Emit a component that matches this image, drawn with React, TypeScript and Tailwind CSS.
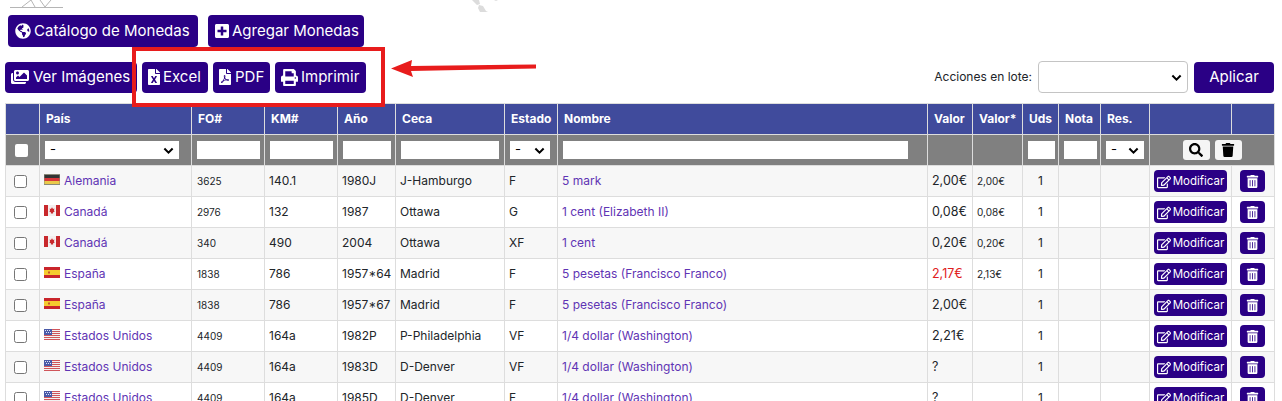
import React from 'react'
import { FaGlobeAmericas, FaPlusSquare, FaImages, FaFileExcel, FaFilePdf, FaPrint, FaSearch, FaTrash, FaRegEdit, FaTrashAlt } from 'react-icons/fa'

const Flag: React.FC<{ code: string }> = ({ code }) => {
  if (code === 'de') {
    return (
      <svg width="16" height="11" viewBox="0 0 16 11" className="inline-block shrink-0 -mt-[3px]">
        <rect width="16" height="11" fill="#8a8a7a" />
        <rect x="0.5" y="1" width="15" height="3" fill="#333" />
        <rect x="0.5" y="4" width="15" height="3" fill="#d8363a" />
        <rect x="0.5" y="7" width="15" height="3" fill="#eac94a" />
      </svg>
    )
  }
  if (code === 'ca') {
    return (
      <svg width="16" height="11" viewBox="0 0 16 11" className="inline-block shrink-0 -mt-[3px]">
        <rect width="16" height="11" fill="#f3eeee" />
        <rect width="4" height="11" fill="#c8282c" />
        <rect x="12" width="4" height="11" fill="#c8282c" />
        <path d="M8 2.2 9 4l1.4-.4-.5 2 .9.6L9 7.4l.1 1H6.900l.1-1-1.800-1.200.9-.6-.5-2L7 4z" fill="#c8282c" />
      </svg>
    )
  }
  if (code === 'es') {
    return (
      <svg width="16" height="11" viewBox="0 0 16 11" className="inline-block shrink-0 -mt-[3px]">
        <rect width="16" height="11" fill="#c9252b" />
        <rect y="3" width="16" height="5" fill="#f5cb2e" />
        <rect x="4" y="4.500" width="2" height="2" fill="#c9552b" />
      </svg>
    )
  }
  return (
    <svg width="16" height="11" viewBox="0 0 16 11" className="inline-block shrink-0 -mt-[3px]">
      <rect width="16" height="11" fill="#f2f2f2" />
      {[0, 2, 4, 6, 8, 10].map((y) => (
        <rect key={y} y={y} width="16" height="1" fill="#d0555a" />
      ))}
      <rect width="8" height="6" fill="#4a5aa8" />
      {[1, 3, 5].map((x) => (
        <rect key={x} x={x} y="1" width="1" height="1" fill="#dfe3f5" />
      ))}
      {[2, 4, 6].map((x) => (
        <rect key={x} x={x} y="3" width="1" height="1" fill="#dfe3f5" />
      ))}
    </svg>
  )
}

const rows = [
  { flag: 'de', pais: 'Alemania', fo: '3625', km: '140.1', ano: '1980J', ceca: 'J-Hamburgo', est: 'F', nombre: '5 mark', valor: '2,00€', valor2: '2,00€' },
  { flag: 'ca', pais: 'Canadá', fo: '2976', km: '132', ano: '1987', ceca: 'Ottawa', est: 'G', nombre: '1 cent (Elizabeth II)', valor: '0,08€', valor2: '0,08€' },
  { flag: 'ca', pais: 'Canadá', fo: '340', km: '490', ano: '2004', ceca: 'Ottawa', est: 'XF', nombre: '1 cent', valor: '0,20€', valor2: '0,20€' },
  { flag: 'es', pais: 'España', fo: '1838', km: '786', ano: '1957*64', ceca: 'Madrid', est: 'F', nombre: '5 pesetas (Francisco Franco)', valor: '2,17€', valor2: '2,13€', red: true },
  { flag: 'es', pais: 'España', fo: '1838', km: '786', ano: '1957*67', ceca: 'Madrid', est: 'F', nombre: '5 pesetas (Francisco Franco)', valor: '2,00€', valor2: '' },
  { flag: 'us', pais: 'Estados Unidos', fo: '4409', km: '164a', ano: '1982P', ceca: 'P-Philadelphia', est: 'VF', nombre: '1/4 dollar (Washington)', valor: '2,21€', valor2: '' },
  { flag: 'us', pais: 'Estados Unidos', fo: '4409', km: '164a', ano: '1983D', ceca: 'D-Denver', est: 'VF', nombre: '1/4 dollar (Washington)', valor: '?', valor2: '' },
  { flag: 'us', pais: 'Estados Unidos', fo: '4409', km: '164a', ano: '1985D', ceca: 'D-Denver', est: 'F', nombre: '1/4 dollar (Washington)', valor: '?', valor2: '' },
]

const colWidths = [34, 152, 73, 73, 58, 109, 53, 370, 45, 50, 36, 42, 49, 82, 43]
const headers = ['', 'País', 'FO#', 'KM#', 'Año', 'Ceca', 'Estado', 'Nombre', 'Valor', 'Valor*', 'Uds', 'Nota', 'Res.', '', '']

const btn = 'inline-flex items-center bg-[#2a0085] text-white rounded-[4px] text-[15px] whitespace-nowrap'
const th = 'border border-[#dddddd] bg-[#404b9c] text-white text-[12px] font-bold text-left px-[6px] h-[31px] p-0'
const filterTd = 'border border-[#dddddd] bg-[#808080] h-[31px] px-[5px] py-0'
const td = 'border border-[#dddddd] h-[31px] px-[4px] py-0 text-[12px] text-[#212529]'
const filterInput = 'block h-[18px] bg-white'
const filterSelect = 'flex items-center justify-between h-[18px] bg-white px-[5px] text-[13px] text-black'
const link = 'text-[#5f34b4]'

const Chevron: React.FC<{ size?: number }> = ({ size = 11 }) => (
  <svg width={size} height={size} viewBox="0 0 12 12" fill="none" stroke="black" strokeWidth="2.2">
    <path d="M1.500 3.800 6 8.300l4.500-4.500" />
  </svg>
)

export default function App() {
  return (
    <div className="relative w-[1282px] h-[401px] overflow-hidden bg-white font-['Inter',sans-serif]">
      {/* logo leftovers on top */}
      <svg width="60" height="10" viewBox="0 0 60 10" className="absolute left-[10px] top-0" fill="none" stroke="#b5b5b5">
        <path d="M0 7.500h53M12 7 21 0l4 7M30 0l5 7 6-7" />
      </svg>
      <svg width="40" height="14" viewBox="0 0 40 14" className="absolute left-[470px] top-0" fill="#dcdcdc">
        <path d="M2 0h7l1 4-3 1zM9 5l4 1 3 5 2 1-8 0-2-4zM24 0h4l-2 1z" />
      </svg>

      <div className="flex gap-[10px] pt-[15px] pl-[8px]">
        <a className={`${btn} w-[190px] h-[32px] gap-[3px] pl-[7px]`}>
          <FaGlobeAmericas className="text-[16px]" /> Catálogo de Monedas
        </a>
        <a className={`${btn} w-[156px] h-[32px] gap-[2px] pl-[6px]`}>
          <FaPlusSquare className="text-[16px]" /> Agregar Monedas
        </a>
      </div>

      <div className="flex items-center mt-[14px] pl-[5px] pr-[8px]">
        <a className={`${btn} w-[132px] h-[31px] gap-[4px] pl-[6px]`}>
          <FaImages className="text-[18px]" /> Ver Imágenes
        </a>
        <a className={`${btn} w-[66px] h-[31px] gap-[1px] pl-[4px] ml-[5px]`}>
          <FaFileExcel className="text-[16px]" /> Excel
        </a>
        <a className={`${btn} w-[57px] h-[31px] gap-[2px] pl-[4px] ml-[5px]`}>
          <FaFilePdf className="text-[16px]" /> PDF
        </a>
        <a className={`${btn} w-[91px] h-[31px] gap-[3px] pl-[6px] ml-[5px]`}>
          <FaPrint className="text-[17px]" /> Imprimir
        </a>
        <span className="ml-auto text-[12px] text-[#212529]">Acciones en lote:</span>
        <div className="flex items-center justify-end w-[150px] h-[32px] ml-[6px] pr-[5px] bg-white border border-[#c4c4c4] rounded-[4px]">
          <Chevron />
        </div>
        <a className={`${btn} justify-center w-[80px] h-[31px] ml-[6px]`}>Aplicar</a>
      </div>

      <table className="table-fixed border-collapse ml-[5px] mt-[10px] w-[1269px]">
        <colgroup>
          {colWidths.map((w, i) => (
            <col key={i} style={{ width: w }} />
          ))}
        </colgroup>
        <thead>
          <tr>
            {headers.map((h, i) => (
              <th key={i} className={th}>{h}</th>
            ))}
          </tr>
          <tr>
            <td className={filterTd}>
              <div className="w-[13px] h-[13px] ml-[4px] bg-white rounded-[2px]" />
            </td>
            <td className={filterTd}>
              <div className={`${filterSelect} w-[134px]`}>- <Chevron /></div>
            </td>
            <td className={filterTd}><div className={`${filterInput} w-[63px]`} /></td>
            <td className={filterTd}><div className={`${filterInput} w-[63px]`} /></td>
            <td className={filterTd}><div className={`${filterInput} w-[48px]`} /></td>
            <td className={filterTd}><div className={`${filterInput} w-[98px]`} /></td>
            <td className={filterTd}>
              <div className={`${filterSelect} w-[40px]`}>- <Chevron /></div>
            </td>
            <td className={filterTd}><div className={`${filterInput} w-[345px]`} /></td>
            <td className={filterTd} />
            <td className={filterTd} />
            <td className={filterTd}><div className={`${filterInput} w-[27px]`} /></td>
            <td className={filterTd}><div className={`${filterInput} w-[33px]`} /></td>
            <td className={filterTd}>
              <div className={`${filterSelect} w-[38px]`}>- <Chevron /></div>
            </td>
            <td className={`${filterTd} !border-r-0`}>
              <div className="flex justify-end gap-[5px] -mr-[15px]">
                <span className="flex items-center justify-center w-[27px] h-[20px] bg-[#f5f5f5] rounded-[3px]"><FaSearch className="text-[14px] text-black" /></span>
                <span className="flex items-center justify-center w-[27px] h-[20px] bg-[#f5f5f5] rounded-[3px]"><FaTrash className="text-[14px] text-black" /></span>
              </div>
            </td>
            <td className={`${filterTd} !border-l-0`} />
          </tr>
        </thead>
        <tbody>
          {rows.map((r, i) => (
            <tr key={i} className={i % 2 === 0 ? 'bg-[#f7f7f7]' : 'bg-white'}>
              <td className={td}>
                <div className="w-[13px] h-[13px] ml-[4px] bg-white border border-[#767676] rounded-[2.5px]" />
              </td>
              <td className={td}>
                <span className="flex items-center gap-[4px]"><Flag code={r.flag} /><span className={link}>{r.pais}</span></span>
              </td>
              <td className={`${td} !text-[10px] !px-[5px]`}>{r.fo}</td>
              <td className={td}>{r.km}</td>
              <td className={td}>{r.ano}</td>
              <td className={td}>{r.ceca}</td>
              <td className={td}>{r.est}</td>
              <td className={td}><span className={link}>{r.nombre}</span></td>
              <td className={`${td} !text-[12.5px] ${r.red ? '!text-[#e02020]' : ''}`}>{r.valor}</td>
              <td className={`${td} !text-[10px]`}>{r.valor2}</td>
              <td className={`${td} text-center`}>1</td>
              <td className={td} />
              <td className={td} />
              <td className={td}>
                <a className="flex items-center justify-center gap-[2px] w-[73px] h-[22px] pt-[1px] bg-[#2a0085] text-white rounded-[4px] text-[11.5px]">
                  <FaRegEdit className="text-[14px]" /> Modificar
                </a>
              </td>
              <td className={`${td} !px-[6px]`}>
                <a className="flex items-center justify-center w-[25px] h-[22px] ml-[2px] bg-[#2a0085] text-white rounded-[4px]">
                  <FaTrashAlt className="text-[13px]" />
                </a>
              </td>
            </tr>
          ))}
        </tbody>
      </table>

      {/* annotation over the export buttons */}
      <div className="absolute left-[132px] top-[47px] w-[253px] h-[60px] border-[4px] border-[#e81c1c]" />
      <svg width="145" height="24" viewBox="0 0 145 24" className="absolute left-[391px] top-[55px]">
        <path d="M0 13.500 21 5l-1 6 125-1.500v4L20 16l2 6z" fill="#e81c1c" />
      </svg>
    </div>
  )
}
